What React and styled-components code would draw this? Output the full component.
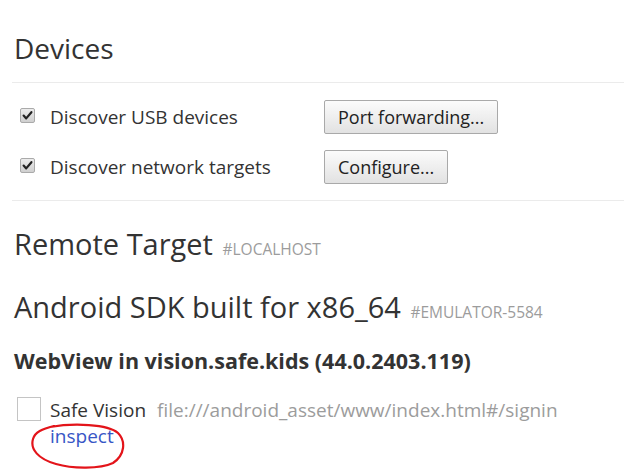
import React from 'react'
import styled, { createGlobalStyle } from 'styled-components'

const GlobalStyle = createGlobalStyle`
    body {
        margin: 0;
        background: #ffffff;
        font-family: "Open Sans", "Noto Sans", sans-serif;
        color: #333333;
    }
`

export default function App() {
    return (
        <>
            <GlobalStyle />
            <Page>
                <Section>
                    <Title>Devices</Title>
                    <Options>
                        <OptionRow>
                            <OptionLabel>
                                <CheckBox checked />
                                <span>Discover USB devices</span>
                            </OptionLabel>
                            <Button>Port forwarding...</Button>
                        </OptionRow>
                        <OptionRow>
                            <OptionLabel>
                                <CheckBox checked />
                                <span>Discover network targets</span>
                            </OptionLabel>
                            <Button>Configure...</Button>
                        </OptionRow>
                    </Options>
                </Section>

                <RemoteTitle>
                    Remote Target <Tag>#LOCALHOST</Tag>
                </RemoteTitle>
                <DeviceTitle>
                    Android SDK built for x86_64 <Tag>#EMULATOR-5584</Tag>
                </DeviceTitle>
                <BrowserTitle>WebView in vision.safe.kids (44.0.2403.119)</BrowserTitle>

                <Target>
                    <Thumb />
                    <TargetBody>
                        <TargetLine>
                            <TargetName>Safe Vision</TargetName>
                            <TargetUrl>file:///android_asset/www/index.html#/signin</TargetUrl>
                        </TargetLine>
                        <Actions>
                            <Link href="#">inspect</Link>
                        </Actions>
                    </TargetBody>
                    <Scribble viewBox="0 0 100 48" width="100" height="48">
                        <path
                            d="M 22 4 C 45 0, 80 1, 90 10 C 98 18, 97 32, 85 40 C 72 46, 45 46, 28 41 C 10 36, 2 26, 5 16 C 7 9, 14 6, 26 3"
                            fill="none"
                            stroke="#e3141a"
                            strokeWidth="2.2"
                            strokeLinecap="round"
                        />
                    </Scribble>
                </Target>
            </Page>
        </>
    )
}

function CheckBox({ checked }) {
    return (
        <Check>
            {checked && (
                <svg viewBox="0 0 15 15" width="15" height="15">
                    <path d="M3.6 7.6 L6.2 10.4 L11.4 4.2" fill="none" stroke="#222" strokeWidth="2.2" strokeLinecap="round" strokeLinejoin="round" />
                </svg>
            )}
        </Check>
    )
}

const Page = styled.div`
    padding: 0 0 0 12px;
    width: 612px;
    min-height: 471px;
`

const Section = styled.div`
    border-bottom: 1px solid #ebebeb;
    padding-bottom: 16px;
`

const Title = styled.h1`
    margin: 0;
    padding: 28px 0 14px 2px;
    font-size: 28px;
    line-height: 40px;
    font-weight: 400;
    border-bottom: 1px solid #ebebeb;
`

const Options = styled.div`
    display: flex;
    flex-direction: column;
    gap: 16px;
    padding-top: 17px;
`

const OptionRow = styled.div`
    display: flex;
    align-items: center;
    height: 34px;
`

const OptionLabel = styled.label`
    display: flex;
    align-items: center;
    gap: 15px;
    width: 312px;
    padding-left: 8px;
    box-sizing: border-box;
    font-size: 19px;
`

const Check = styled.span`
    width: 15px;
    height: 15px;
    box-sizing: border-box;
    border: 1px solid #aaaaaa;
    border-radius: 2px;
    background: linear-gradient(#ececec, #cfcfcf);
    margin-bottom: 4px;
    display: flex;
    align-items: center;
    justify-content: center;

    svg {
        margin: -1px;
    }
`

const Button = styled.button`
    height: 34px;
    padding: 0 13px;
    font-family: "Open Sans", "Noto Sans", sans-serif;
    font-size: 18px;
    color: #222;
    border: 1px solid #a9a9a9;
    border-radius: 2px;
    background: linear-gradient(#fbfbfb, #e2e2e2);
`

const Tag = styled.span`
    font-size: 15.5px;
    color: #9c9c9c;
    margin-left: 2px;
`

const RemoteTitle = styled.h2`
    margin: 24px 0 0 0;
    padding-left: 2px;
    font-size: 29px;
    line-height: 38px;
    font-weight: 400;
`

const DeviceTitle = styled.h2`
    margin: 19px 0 0 0;
    padding-left: 2px;
    font-size: 29px;
    line-height: 40px;
    font-weight: 400;
`

const BrowserTitle = styled.h3`
    margin: 15px 0 0 0;
    padding-left: 2px;
    font-size: 21.5px;
    line-height: 28px;
    font-weight: 700;
`

const Target = styled.div`
    position: relative;
    display: flex;
    gap: 9px;
    margin-top: 22px;
    padding-left: 5px;
`

const Thumb = styled.div`
    width: 24px;
    height: 24px;
    box-sizing: border-box;
    border: 1px solid #c4c4c4;
    background: #fff;
`

const TargetBody = styled.div`
    display: flex;
    flex-direction: column;
    font-size: 19px;
    line-height: 26px;
`

const TargetLine = styled.div`
    display: flex;
    gap: 11px;
    white-space: nowrap;
`

const TargetName = styled.span`
    color: #333;
`

const TargetUrl = styled.span`
    color: #9c9c9c;
`

const Actions = styled.div`
    display: flex;
`

const Link = styled.a`
    color: #3756c6;
    text-decoration: none;
`

const Scribble = styled.svg`
    position: absolute;
    left: 16px;
    top: 26px;
    pointer-events: none;
`
